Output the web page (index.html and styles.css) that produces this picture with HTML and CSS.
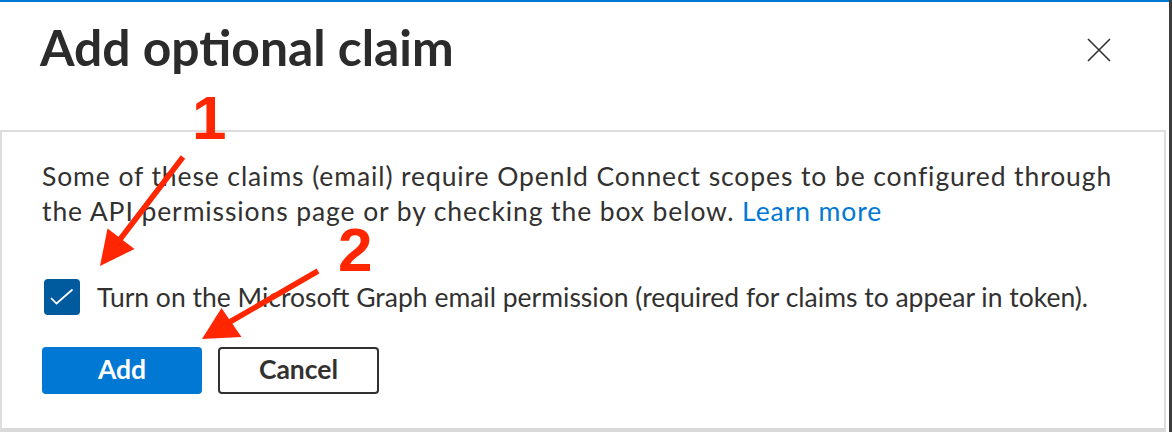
FILE: index.html
```html
<!DOCTYPE html>
<html lang="en">
<head>
<meta charset="utf-8">
<title>Add optional claim</title>
<link rel="stylesheet" href="styles.css">
</head>
<body>
<div class="window">
  <div class="main">
    <header class="header">
      <h1 class="title">Add optional claim</h1>
      <button class="close" aria-label="Close">
        <svg width="24" height="24" viewBox="0 0 24 24"><path d="M1 1 L23 23 M23 1 L1 23" stroke="#323130" stroke-width="1.6" fill="none"/></svg>
      </button>
    </header>
    <section class="box">
      <p class="info">Some of these claims (email) require OpenId Connect scopes to be configured through<br>the API permissions page or by checking the box below. <a href="#" class="link">Learn more</a></p>
      <label class="check-row">
        <span class="checkbox">
          <svg width="36" height="36" viewBox="0 0 36 36"><path d="M7 19 L12.5 24.5 L28.5 10.5" stroke="#fff" stroke-width="1.7" fill="none"/></svg>
        </span>
        <span class="check-label">Turn on the Microsoft Graph email permission (required for claims to appear in token).</span>
      </label>
      <div class="actions">
        <button class="btn btn-primary">Add</button>
        <button class="btn btn-default">Cancel</button>
      </div>
    </section>
  </div>
  <div class="edge"></div>
</div>

<svg class="annot" width="1172" height="432" viewBox="0 0 1172 432">
  <line x1="183" y1="157" x2="118" y2="242" stroke="#ff2600" stroke-width="5.5"/>
  <polygon points="100,266 134.5,249 107.5,228.5" fill="#ff2600"/>
  <line x1="318" y1="271" x2="228" y2="323" stroke="#ff2600" stroke-width="5.5"/>
  <polygon points="202,339 241.5,337 221.5,308" fill="#ff2600"/>
</svg>
<span class="num num-1">1</span>
<span class="num num-2">2</span>
</body>
</html>
```

FILE: styles.css
```css
* { box-sizing: border-box; }
html, body {
  margin: 0;
  padding: 0;
  width: 1172px;
  height: 432px;
  overflow: hidden;
  background: #ffffff;
}
body {
  position: relative;
  font-family: Lato, "Open Sans", sans-serif;
  color: #323130;
}
.window {
  display: flex;
  height: 432px;
}
.main {
  flex: 1;
  display: flex;
  flex-direction: column;
  border-top: 2px solid #0078d4;
}
.edge {
  width: 3px;
  background: #3c3c3c;
}
.header {
  height: 128px;
  display: flex;
  align-items: flex-start;
  justify-content: space-between;
  padding: 0 58px 0 40px;
}
.title {
  margin: 16px 0 0 0;
  font-size: 49.8px;
  line-height: 58px;
  font-weight: 700;
  color: #2b2b2b;
}
.close {
  margin-top: 36px;
  width: 24px;
  height: 24px;
  padding: 0;
  border: 0;
  background: none;
}
.close svg { display: block; }
.box {
  flex: 1;
  margin-right: 3px;
  border: 2px solid #dddddd;
  border-bottom: 4px solid #d9d9d9;
  padding: 27px 40px 0 40px;
}
.info {
  margin: 0;
  font-size: 26.5px;
  line-height: 35px;
  letter-spacing: 0.9px;
  white-space: nowrap;
}
.link {
  color: #0078d4;
  text-decoration: none;
}
.check-row {
  margin-top: 50px;
  display: flex;
  align-items: center;
  gap: 17px;
  padding-left: 2px;
}
.checkbox {
  width: 36px;
  height: 36px;
  border-radius: 4px;
  background: #005a9e;
  flex: none;
}
.checkbox svg { display: block; }
.check-label {
  font-size: 26.5px;
  line-height: 34px;
  white-space: nowrap;
}
.actions {
  margin-top: 32px;
  display: flex;
  gap: 16px;
}
.btn {
  width: 160px;
  height: 47px;
  border-radius: 4px;
  font-family: Lato, "Open Sans", sans-serif;
  font-size: 26.5px;
  font-weight: 700;
  padding: 0 0 3px 0;
}
.btn-primary {
  background: #0078d4;
  color: #ffffff;
  border: 0;
}
.btn-default {
  width: 161px;
  background: #ffffff;
  color: #323130;
  border: 2px solid #323130;
}
.annot {
  position: absolute;
  left: 0;
  top: 0;
  pointer-events: none;
}
.num {
  position: absolute;
  font-family: "Liberation Sans", Arial, sans-serif;
  font-weight: 700;
  font-size: 62px;
  line-height: 1;
  color: #ff2600;
}
.num-1 { left: 192px; top: 87px; }
.num-2 { left: 338px; top: 219px; }
```
